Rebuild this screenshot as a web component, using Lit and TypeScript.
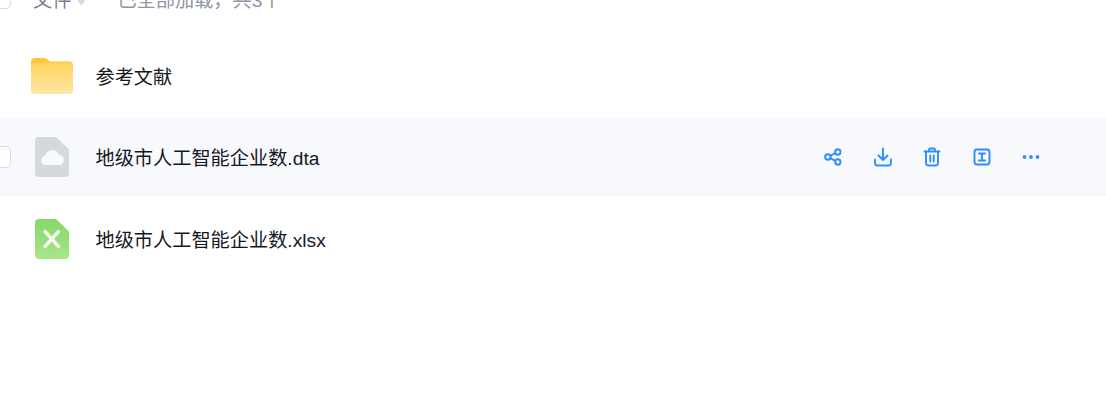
import { LitElement, html, css, svg } from "lit";
import { customElement } from "lit/decorators.js";

const folderIcon = svg`<svg class="ficon" width="44" height="37" viewBox="0 0 44 37">
  <defs>
    <linearGradient id="fg" x1="0" y1="0" x2="0" y2="1"><stop offset="0" stop-color="#ffd45f"/><stop offset="1" stop-color="#ffe6a3"/></linearGradient>
  </defs>
  <path d="M1 5a4 4 0 0 1 4-4h9c1.500 0 2.500.4 3.500 1.200L20 4.500h19a4 4 0 0 1 4 4v8H1z" fill="#ffc53f"/>
  <path d="M1 10a4 4 0 0 1 4-4h34a4 4 0 0 1 4 4v23a4 4 0 0 1-4 4H5a4 4 0 0 1-4-4z" fill="url(#fg)"/>
</svg>`;

const fileShape = "M9 1h15c1.400 0 2.600.5 3.600 1.400l9.900 9.700c1 1 1.500 2.200 1.500 3.600V37a4 4 0 0 1-4 4H9a4 4 0 0 1-4-4V5a4 4 0 0 1 4-4z";

const cloudIcon = svg`<svg class="ficon" width="44" height="42" viewBox="0 0 44 42">
  <path d=${fileShape} fill="#d5d8dd"/>
  <path d="M15.500 29a4.600 4.600 0 0 1-.6-9.100 7.500 7.500 0 0 1 14.200-1.200 5.200 5.200 0 0 1 .4 10.300z" fill="#f8f9fc"/>
</svg>`;

const xlsIcon = svg`<svg class="ficon" width="44" height="42" viewBox="0 0 44 42">
  <defs>
    <linearGradient id="xg" x1="0" y1="0" x2="0" y2="1"><stop offset="0" stop-color="#86d768"/><stop offset="1" stop-color="#a8e68a"/></linearGradient>
  </defs>
  <path d=${fileShape} fill="url(#xg)"/>
  <path d="M15 13.500l13.500 15M28.500 13.500L15 28.500" stroke="#f4fbef" stroke-width="3.400" stroke-linecap="round" fill="none"/>
</svg>`;

const share = html`<svg width="20" height="20" viewBox="0 0 20 20" fill="none" stroke="#2f8cff" stroke-width="1.900">
  <circle cx="4.800" cy="10" r="2.700"/><circle cx="14.800" cy="5" r="2.700"/><circle cx="14.800" cy="15" r="2.700"/>
  <path d="M7.200 8.800l5.200-2.600M7.200 11.200l5.200 2.600"/>
</svg>`;
const download = html`<svg width="20" height="20" viewBox="0 0 20 20" fill="none" stroke="#2f8cff" stroke-width="1.900" stroke-linecap="round" stroke-linejoin="round">
  <path d="M10 1.500v11M5.500 8.500l4.500 4.500 4.500-4.500"/>
  <path d="M2 12.500v3.500a2.500 2.500 0 0 0 2.500 2.500h11a2.500 2.500 0 0 0 2.500-2.500v-3.500"/>
</svg>`;
const trash = html`<svg width="20" height="20" viewBox="0 0 20 20" fill="none" stroke="#2f8cff" stroke-width="1.900" stroke-linecap="round" stroke-linejoin="round">
  <path d="M2.500 4.500h15M7 4.500V3a1.500 1.500 0 0 1 1.500-1.500h3A1.500 1.500 0 0 1 13 3v1.500"/>
  <path d="M4 4.500V16a2.500 2.500 0 0 0 2.500 2.500h7A2.500 2.500 0 0 0 16 16V4.500"/>
  <path d="M8.300 8.500v6M11.700 8.500v6"/>
</svg>`;
const rename = html`<svg width="20" height="20" viewBox="0 0 20 20" fill="none" stroke="#2f8cff" stroke-width="1.900" stroke-linecap="round" stroke-linejoin="round">
  <rect x="2.500" y="2.500" width="15" height="15" rx="2.500"/>
  <path d="M7 6.500h6M7 13.500h6M10 6.500v7"/>
</svg>`;
const more = html`<svg width="20" height="20" viewBox="0 0 20 20" fill="#2f8cff">
  <circle cx="3.500" cy="10" r="1.900"/><circle cx="10" cy="10" r="1.900"/><circle cx="16.500" cy="10" r="1.900"/>
</svg>`;

@customElement("app-root")
export class AppRoot extends LitElement {
  static styles = css`
    :host {
      display: block;
      height: 418px;
      overflow: hidden;
      background: #fff;
      font-family: "Liberation Sans", "Noto Sans CJK SC", sans-serif;
      font-size: 19.2px;
    }
    .check {
      box-sizing: border-box;
      flex: none;
      width: 22px;
      height: 22px;
      margin-left: -11px;
      border: 1px solid #d9dce3;
      border-radius: 5px;
      background: #fff;
    }
    .head {
      display: flex;
      align-items: center;
      height: 22px;
      margin-top: -13px;
      color: #777e8e;
      line-height: 22px;
    }
    .head .title { margin: 5px 0 0 22px; }
    .sort {
      width: 8px;
      height: 10px;
      margin: 5px 0 0 6px;
      background: #d5d8df;
      clip-path: polygon(50% 0, 100% 45%, 50% 100%, 0 45%);
    }
    .head .status { margin: 5px 0 0 32px; color: #8f95a5; white-space: nowrap; }
    .list { display: flex; flex-direction: column; gap: 4.800px; margin-top: 28.400px; }
    .row {
      display: flex;
      align-items: center;
      height: 76.800px;
      color: #14181f;
    }
    .row.active { background: #f8f9fd; }
    .icon {
      flex: none;
      display: flex;
      width: 44px;
      margin-left: 30px;
    }
    .row.active .icon { margin-left: 19px; }
    .name { margin: 4px 0 0 21.500px; flex: 1; white-space: nowrap; line-height: 26px; }
    .actions { display: flex; gap: 29.600px; margin-right: 64.600px; }
    .actions svg { display: block; }
  `;

  render() {
    return html`
      <div class="head">
        <span class="check"></span>
        <span class="title">文件</span>
        <span class="sort"></span>
        <span class="status">已全部加载，共3个</span>
      </div>
      <div class="list">
        <div class="row">
          <span class="icon">${folderIcon}</span>
          <span class="name">参考文献</span>
        </div>
        <div class="row active">
          <span class="check"></span>
          <span class="icon">${cloudIcon}</span>
          <span class="name">地级市人工智能企业数.dta</span>
          <div class="actions">${share}${download}${trash}${rename}${more}</div>
        </div>
        <div class="row">
          <span class="icon">${xlsIcon}</span>
          <span class="name">地级市人工智能企业数.xlsx</span>
        </div>
      </div>
    `;
  }
}
